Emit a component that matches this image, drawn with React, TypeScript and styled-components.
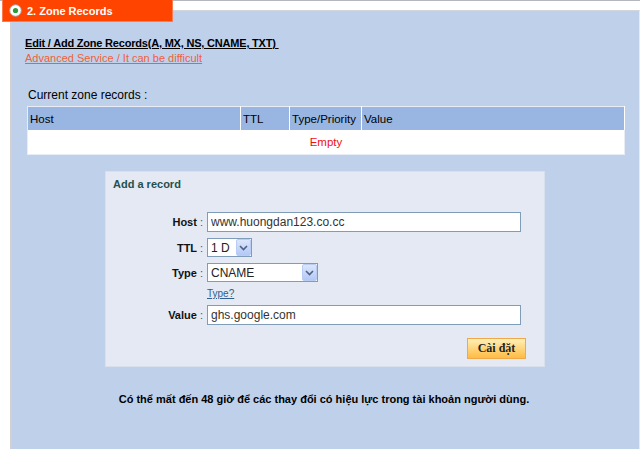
import React from "react";
import styled, { createGlobalStyle } from "styled-components";

const Global = createGlobalStyle`
  html, body { margin: 0; padding: 0; background: #ffffff; }
  body { font-family: "Liberation Sans", Arial, sans-serif; font-size: 11px; color: #000; }
  #root { width: 640px; height: 449px; overflow: hidden; }
`;

const Page = styled.div`
  position: relative;
  width: 640px;
  height: 449px;
  border-top: 1px solid #b4b7be;
  box-sizing: border-box;
  padding-top: 9px;
`;

const Tab = styled.div`
  position: absolute;
  left: 2px;
  top: -1px;
  width: 171px;
  height: 22px;
  box-sizing: border-box;
  background: #ff4400;
  border: 1px solid #ff7a50;
  border-top: none;
  display: flex;
  align-items: center;
  gap: 5px;
  padding-left: 6px;
  color: #ffffff;
  font-weight: bold;
  font-size: 11px;
  z-index: 2;
`;

const Panel = styled.div`
  margin-left: 10px;
  width: 630px;
  height: 440px;
  box-sizing: border-box;
  background: #bfd0eb;
  border-left: 2px solid #cfcfd4;
  border-top: 1px solid #d4d6dc;
  border-right: 1px solid #e6e9f0;
  padding: 26px 14px 0 13px;
`;

const TitleLink = styled.a`
  display: block;
  color: #000;
  font-weight: bold;
  text-decoration: underline;
  line-height: 12px;
  letter-spacing: -0.2px;
  margin-bottom: 3px;
`;

const WarnLink = styled.a`
  display: block;
  color: #f0603c;
  text-decoration: underline;
  line-height: 12px;
`;

const SectionLabel = styled.div`
  margin: 25px 0 5px 3px;
  line-height: 12px;
  font-size: 12px;
`;

const Table = styled.table`
  margin-left: 2px;
  width: 598px;
  border-collapse: collapse;
  border: 1px solid #e8ecf4;
  background: #ffffff;
`;

const Th = styled.th<{ $w?: number }>`
  background: #99b5e1;
  height: 23px;
  padding: 0 2px;
  text-align: left;
  font-weight: normal;
  font-size: 11.5px;
  border-right: 1px solid #ffffff;
  width: ${(p) => (p.$w ? `${p.$w}px` : "auto")};
  white-space: nowrap;
`;

const EmptyCell = styled.td`
  height: 22px;
  text-align: center;
  color: #ee1111;
  font-size: 11.5px;
`;

const Box = styled.div`
  margin: 16px 0 0 80px;
  width: 440px;
  height: 196px;
  box-sizing: border-box;
  background: #e4e9f3;
  border: 1px solid #d8e0ee;
  padding: 6px 18px 0 7px;
`;

const BoxTitle = styled.div`
  color: #24504f;
  font-weight: bold;
  line-height: 12px;
`;

const Form = styled.div`
  margin-top: 22px;
  display: grid;
  grid-template-columns: 90px 314px;
  column-gap: 4px;
  row-gap: 6px;
  align-items: center;
`;

const Label = styled.label`
  text-align: right;
  font-weight: bold;
  color: #111;
  white-space: nowrap;
  & span { font-weight: normal; color: #555; }
`;

const TextInput = styled.input`
  width: 314px;
  height: 20px;
  box-sizing: border-box;
  border: 1px solid #7f9db9;
  padding: 0 3px;
  font-family: "Liberation Sans", Arial, sans-serif;
  font-size: 12px;
  color: #333;
  background: #fff;
  outline: none;
`;

const SelectWrap = styled.span<{ $w: number }>`
  position: relative;
  display: block;
  width: ${(p) => p.$w}px;
  height: 19px;
`;

const Select = styled.select`
  appearance: none;
  -webkit-appearance: none;
  display: block;
  width: 100%;
  height: 19px;
  box-sizing: border-box;
  border: 1px solid #7f9db9;
  border-radius: 0;
  background: #fff;
  padding: 0 0 0 3px;
  font-family: "Liberation Sans", Arial, sans-serif;
  font-size: 12px;
  color: #222;
  outline: none;
`;

const Arrow = styled.span`
  position: absolute;
  right: 1px;
  top: 1px;
  width: 15px;
  height: 17px;
  box-sizing: border-box;
  background: linear-gradient(#dce6fc, #b4c8f6);
  border: 1px solid #b8ccf4;
  border-radius: 2px;
  display: flex;
  align-items: center;
  justify-content: center;
  pointer-events: none;
`;

const HelpLink = styled.a`
  grid-column: 2;
  color: #2f5f8f;
  text-decoration: underline;
  font-size: 10px;
  line-height: 11px;
  height: 11px;
`;

const ButtonRow = styled.div`
  display: flex;
  justify-content: flex-end;
  margin-top: 13px;
`;

const Button = styled.button`
  width: 59px;
  height: 21px;
  box-sizing: border-box;
  border: 1px solid #f0a848;
  background: linear-gradient(#fff0b8, #ffd070 60%, #ffbb44);
  font-family: "Liberation Serif", "Times New Roman", serif;
  font-weight: bold;
  font-size: 12px;
  color: #222;
  padding: 0;
`;

const Note = styled.div`
  margin-top: 26px;
  text-align: center;
  font-weight: bold;
  line-height: 12px;
  padding-right: 2px;
`;

const Chevron = () => (
  <svg width="9" height="6" viewBox="0 0 9 6">
    <path d="M1 1 L4.5 4.5 L8 1" fill="none" stroke="#4d6185" strokeWidth="1.6" />
  </svg>
);

const RadioIcon = () => (
  <svg width="13" height="13" viewBox="0 0 13 13">
    <circle cx="6.5" cy="6.5" r="5.8" fill="#ffffff" stroke="#9aa0a8" strokeWidth="1" />
    <circle cx="6.5" cy="6.5" r="2.6" fill="#2f9a3a" />
  </svg>
);

export default function App() {
  return (
    <>
      <Global />
      <Page>
        <Tab>
          <RadioIcon />
          <span>2. Zone Records</span>
        </Tab>
        <Panel>
          <TitleLink>Edit / Add Zone Records(A, MX, NS, CNAME, TXT)&nbsp;</TitleLink>
          <WarnLink>Advanced Service / It can be difficult</WarnLink>
          <SectionLabel>Current zone records :</SectionLabel>
          <Table>
            <thead>
              <tr>
                <Th $w={208}>Host</Th>
                <Th $w={44}>TTL</Th>
                <Th $w={67}>Type/Priority</Th>
                <Th>Value</Th>
              </tr>
            </thead>
            <tbody>
              <tr>
                <EmptyCell colSpan={4}>Empty</EmptyCell>
              </tr>
            </tbody>
          </Table>
          <Box>
            <BoxTitle>Add a record</BoxTitle>
            <Form>
              <Label>
                Host <span>:</span>
              </Label>
              <TextInput defaultValue="www.huongdan123.co.cc" />
              <Label>
                TTL <span>:</span>
              </Label>
              <SelectWrap $w={45}>
                <Select defaultValue="1D">
                  <option value="1D">1 D</option>
                </Select>
                <Arrow>
                  <Chevron />
                </Arrow>
              </SelectWrap>
              <Label>
                Type <span>:</span>
              </Label>
              <SelectWrap $w={111}>
                <Select defaultValue="CNAME">
                  <option value="CNAME">CNAME</option>
                </Select>
                <Arrow>
                  <Chevron />
                </Arrow>
              </SelectWrap>
              <HelpLink>Type?</HelpLink>
              <Label>
                Value <span>:</span>
              </Label>
              <TextInput defaultValue="ghs.google.com" />
            </Form>
            <ButtonRow>
              <Button>Cài đặt</Button>
            </ButtonRow>
          </Box>
          <Note>Có thể mất đến 48 giờ để các thay đổi có hiệu lực trong tài khoản người dùng.</Note>
        </Panel>
      </Page>
    </>
  );
}
